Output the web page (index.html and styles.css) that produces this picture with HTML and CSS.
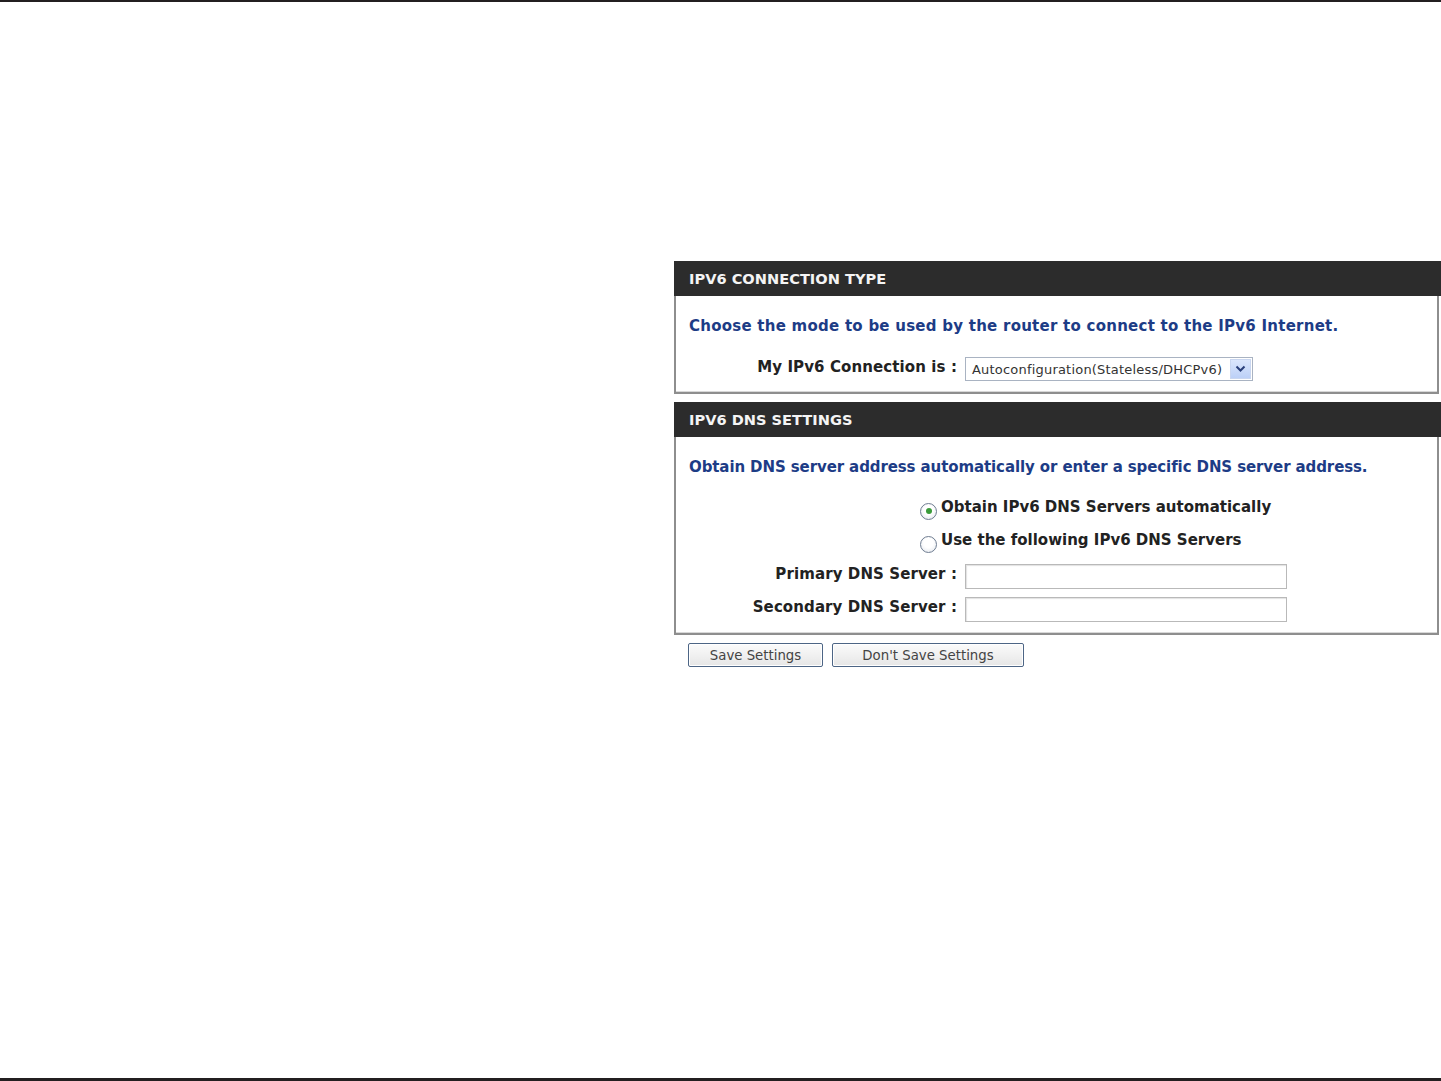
FILE: index.html
```html
<!DOCTYPE html>
<html lang="en">
<head>
<meta charset="utf-8">
<title>IPv6</title>
<link rel="stylesheet" href="styles.css">
</head>
<body>
<div class="page">
  <div class="rule rule-top"></div>
  <main class="content">
    <section class="box">
      <h2 class="box-head">IPV6 CONNECTION TYPE</h2>
      <div class="box-body body-conn">
        <p class="intro intro-conn">Choose the mode to be used by the router to connect to the IPv6 Internet.</p>
        <div class="field">
          <span class="label">My IPv6 Connection is :</span>
          <div class="select">
            <span class="select-text">Autoconfiguration(Stateless/DHCPv6)</span>
            <span class="select-btn">
              <svg width="11" height="8" viewBox="0 0 11 8"><path d="M1.5 1.5 L5.5 5.5 L9.5 1.5" fill="none" stroke="#2a3f7a" stroke-width="2"/></svg>
            </span>
          </div>
        </div>
      </div>
    </section>

    <section class="box box-dns">
      <h2 class="box-head">IPV6 DNS SETTINGS</h2>
      <div class="box-body body-dns">
        <p class="intro intro-dns">Obtain DNS server address automatically or enter a specific DNS server address.</p>
        <div class="radio-row row-auto">
          <span class="radio checked"></span>
          <span class="radio-label">Obtain IPv6 DNS Servers automatically</span>
        </div>
        <div class="radio-row row-manual">
          <span class="radio"></span>
          <span class="radio-label">Use the following IPv6 DNS Servers</span>
        </div>
        <div class="field field-primary">
          <span class="label">Primary DNS Server :</span>
          <span class="input"></span>
        </div>
        <div class="field field-secondary">
          <span class="label">Secondary DNS Server :</span>
          <span class="input"></span>
        </div>
      </div>
    </section>

    <div class="actions">
      <button class="btn btn-save">Save Settings</button>
      <button class="btn btn-dont">Don't Save Settings</button>
    </div>
  </main>
  <div class="rule rule-bottom"></div>
</div>
</body>
</html>
```

FILE: styles.css
```css
html, body {
  margin: 0;
  padding: 0;
  background: #ffffff;
}

.page {
  display: flex;
  flex-direction: column;
  min-height: 1081px;
  font-family: "DejaVu Sans", "Noto Sans", sans-serif;
}

.rule {
  background: #231f20;
  flex: none;
}

.rule-top {
  height: 2px;
}

.rule-bottom {
  height: 3px;
}

.content {
  flex: 1;
  padding: 259px 0 0 674px;
}

.box {
  width: 767px;
}

.box-dns {
  margin-top: 8px;
}

.box-head {
  margin: 0;
  height: 35px;
  line-height: 36px;
  background: #2c2c2c;
  color: #f4f4f4;
  font-size: 14.6px;
  font-weight: bold;
  padding-left: 15px;
}

.box-body {
  border: 2px solid #8e8e8e;
  border-top: none;
  margin-right: 2px;
  box-shadow: inset 0 -1px 0 #d8d8d8;
  padding: 20px 0 11px 13px;
}

.intro {
  margin: 0;
  height: 20px;
  line-height: 20px;
  color: #1d3c86;
  font-size: 15px;
  font-weight: bold;
  white-space: nowrap;
}

.intro-conn {
  letter-spacing: 0.25px;
}

.intro-dns {
  letter-spacing: -0.1px;
}

.field {
  display: flex;
  align-items: center;
}

.body-conn .field {
  margin-top: 21px;
  height: 24px;
}

.label {
  width: 276px;
  text-align: right;
  padding-right: 8px;
  padding-bottom: 5px;
  box-sizing: border-box;
  font-size: 15px;
  font-weight: bold;
  color: #222222;
  white-space: nowrap;
  letter-spacing: 0.1px;
}

.select {
  width: 288px;
  height: 24px;
  box-sizing: border-box;
  border: 1px solid #a9b3c2;
  display: flex;
  align-items: center;
  justify-content: space-between;
  padding: 1px 1px 1px 6px;
  background: #ffffff;
}

.select-text {
  font-size: 13px;
  color: #333333;
  letter-spacing: 0.2px;
  white-space: nowrap;
}

.select-btn {
  width: 21px;
  height: 20px;
  background: linear-gradient(#dbe6fc, #bcd0f7);
  border: 1px solid #c9d6f0;
  box-sizing: border-box;
  display: flex;
  align-items: center;
  justify-content: center;
}

.radio-row {
  display: flex;
  align-items: center;
  height: 25px;
  padding-left: 231px;
}

.row-auto {
  margin-top: 17px;
}

.row-manual {
  margin-top: 8px;
}

.radio {
  width: 17px;
  height: 17px;
  box-sizing: border-box;
  border-radius: 50%;
  border: 1px solid #6f7d91;
  background: radial-gradient(circle at 50% 40%, #ffffff 40%, #dfe3ea 100%);
  margin: 9px 4px 0 0;
  display: flex;
  align-items: center;
  justify-content: center;
}

.radio.checked::after {
  content: "";
  width: 6px;
  height: 6px;
  border-radius: 50%;
  background: #3a9b3a;
}

.radio-label {
  font-size: 15px;
  font-weight: bold;
  color: #222222;
  white-space: nowrap;
}

.field-primary {
  margin-top: 12px;
  height: 25px;
}

.field-secondary {
  margin-top: 8px;
  height: 25px;
}

.input {
  width: 322px;
  height: 25px;
  box-sizing: border-box;
  border: 1px solid #b9b9b9;
  box-shadow: inset 1px 1px 1px #e2e2e2;
  background: #ffffff;
}

.actions {
  display: flex;
  gap: 9px;
  margin-top: 8px;
  padding-left: 14px;
}

.btn {
  height: 24px;
  box-sizing: border-box;
  border: 1px solid #4d6585;
  border-radius: 2px;
  background: linear-gradient(#fbfbfb, #e6e6e6);
  box-shadow: inset 0 0 0 1px #ffffff;
  font-family: "DejaVu Sans", sans-serif;
  font-size: 13.3px;
  color: #444444;
  padding: 0;
  white-space: nowrap;
}

.btn-save {
  width: 135px;
}

.btn-dont {
  width: 192px;
}
```
